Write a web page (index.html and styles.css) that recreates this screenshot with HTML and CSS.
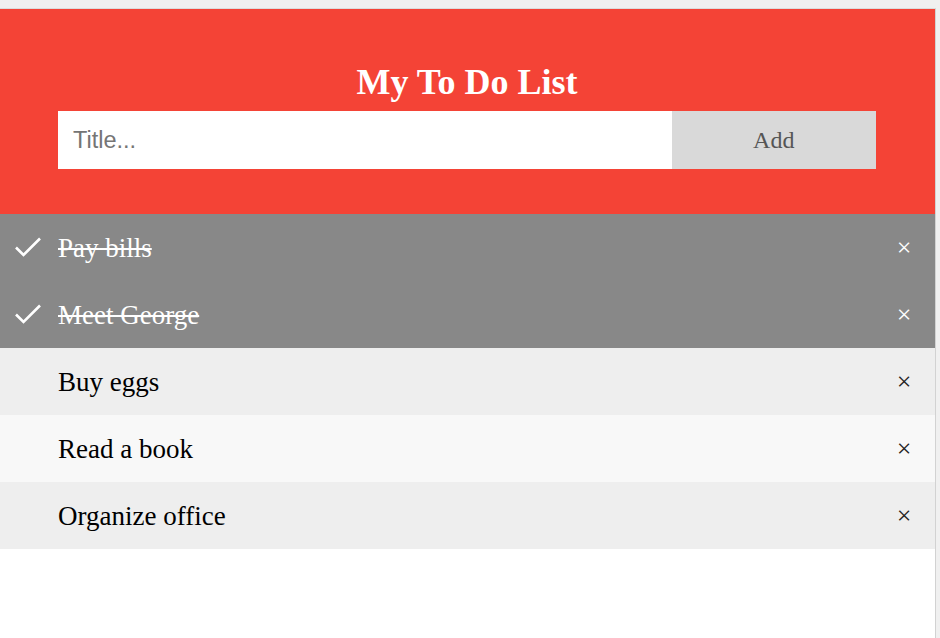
FILE: index.html
```html
<!DOCTYPE html>
<html>
<head>
<meta charset="utf-8">
<link rel="stylesheet" href="styles.css">
</head>
<body>
<div class="frame">
  <div class="header">
    <h2 class="title">My To Do List</h2>
    <div class="form">
      <input class="title-input" type="text" placeholder="Title...">
      <span class="add-btn">Add</span>
    </div>
  </div>
  <ul class="list">
    <li class="item checked">
      <span class="check"><svg width="30" height="24" viewBox="0 0 30 24"><path d="M3 12.5 L10.5 20 L27 3.5" fill="none" stroke="#fff" stroke-width="2.6"/></svg></span>
      <span class="text">Pay bills</span>
      <span class="close">×</span>
    </li>
    <li class="item checked">
      <span class="check"><svg width="30" height="24" viewBox="0 0 30 24"><path d="M3 12.5 L10.5 20 L27 3.5" fill="none" stroke="#fff" stroke-width="2.6"/></svg></span>
      <span class="text">Meet George</span>
      <span class="close">×</span>
    </li>
    <li class="item">
      <span class="check"></span>
      <span class="text">Buy eggs</span>
      <span class="close">×</span>
    </li>
    <li class="item light">
      <span class="check"></span>
      <span class="text">Read a book</span>
      <span class="close">×</span>
    </li>
    <li class="item">
      <span class="check"></span>
      <span class="text">Organize office</span>
      <span class="close">×</span>
    </li>
  </ul>
</div>
</body>
</html>
```

FILE: styles.css
```css
html, body {
  margin: 0;
  padding: 0;
  height: 100%;
  background: #f0f0f0;
  overflow: hidden;
}
.frame {
  margin-top: 8px;
  width: 936px;
  height: 630px;
  background: #fff;
  border-top: 1px solid #dcdcdc;
  border-right: 1px solid #d2d2d2;
  box-sizing: border-box;
  font-family: "Liberation Serif", "Times New Roman", serif;
}
.header {
  background: #f44336;
  padding: 0 59px 45px 58px;
  display: flex;
  flex-direction: column;
  align-items: stretch;
}
.title {
  margin: 0;
  padding-top: 48px;
  height: 54px;
  color: #fff;
  font-size: 36px;
  font-weight: bold;
  line-height: 50px;
  text-align: center;
}
.form {
  display: flex;
  height: 58px;
}
.title-input {
  width: 75%;
  border: 0;
  margin: 0;
  padding: 0 15px;
  box-sizing: border-box;
  height: 58px;
  font-family: "Liberation Sans", Arial, sans-serif;
  font-size: 23.5px;
  outline: none;
  background: #fff;
}
.title-input::placeholder {
  color: #757575;
}
.add-btn {
  width: 25%;
  background: #d9d9d9;
  color: #555;
  font-size: 24px;
  display: flex;
  align-items: center;
  justify-content: center;
}
.list {
  list-style: none;
  margin: 0;
  padding: 0;
}
.item {
  display: flex;
  align-items: center;
  height: 67px;
  background: #eeeeee;
  font-size: 27px;
  color: #000;
}
.item.light {
  background: #f8f8f8;
}
.item.checked {
  background: #888888;
  color: #fff;
}
.item.checked .text {
  text-decoration: line-through;
}
.check {
  width: 58px;
  flex: none;
  display: flex;
  align-items: center;
  padding-left: 13px;
  box-sizing: border-box;
  margin-top: -1px;
}
.text {
  flex: 1;
  margin-top: 1px;
}
.close {
  width: 62px;
  flex: none;
  text-align: center;
  font-size: 26px;
  color: #222;
}
.item.checked .close {
  color: #fff;
}
```
